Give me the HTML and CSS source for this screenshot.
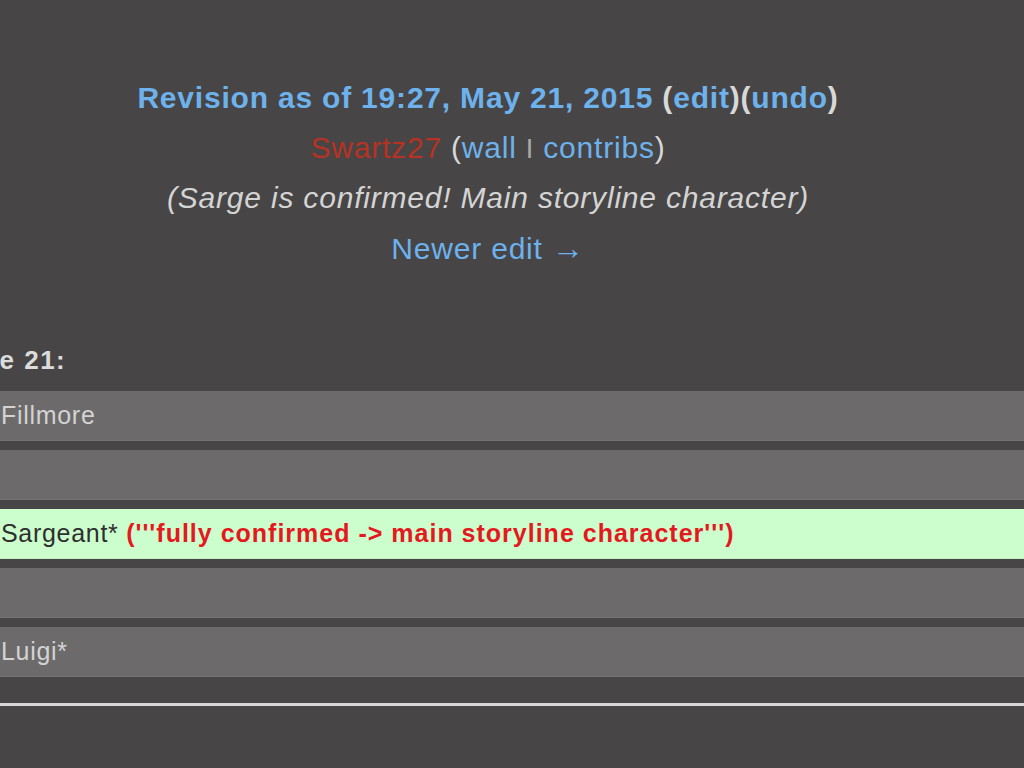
FILE: index.html
```html
<!DOCTYPE html>
<html lang="en">
<head>
<meta charset="utf-8">
<title>Revision diff</title>
<link rel="stylesheet" href="styles.css">
</head>
<body>
<div class="page">
  <header class="rev-header">
    <div class="rev-line rev-title"><a class="link">Revision as of 19:27, May 21, 2015</a> <span class="paren">(</span><a class="link">edit</a><span class="paren">)(</span><a class="link">undo</a><span class="paren">)</span></div>
    <div class="rev-line"><a class="user">Swartz27</a> <span class="paren">(</span><a class="link-plain">wall</a> <span class="sep">I</span> <a class="link-plain">contribs</a><span class="paren">)</span></div>
    <div class="rev-line summary">(Sarge is confirmed! Main storyline character)</div>
    <div class="rev-line"><a class="link-plain">Newer edit <span class="arrow">→</span></a></div>
  </header>
  <section class="diff">
    <div class="diff-lineno">Line 21:</div>
    <div class="diff-row context">Fillmore</div>
    <div class="diff-row context"></div>
    <div class="diff-row added">Sargeant* <strong class="ins">('''fully confirmed -&gt; main storyline character''')</strong></div>
    <div class="diff-row context"></div>
    <div class="diff-row context">Luigi*</div>
  </section>
  <hr class="rule">
</div>
</body>
</html>
```

FILE: styles.css
```css
html, body {
  margin: 0;
  padding: 0;
  background: #474546;
  height: 100%;
  overflow: hidden;
}

.page {
  font-family: "Liberation Sans", Arial, sans-serif;
  color: #dddddd;
  padding-top: 73px;
}

.rev-header {
  text-align: center;
  padding-right: 48px;
  font-size: 30px;
  letter-spacing: 0.8px;
}

.rev-line {
  line-height: 50px;
  height: 50px;
  white-space: nowrap;
}

.rev-title {
  font-weight: bold;
}

.link, .link-plain {
  color: #6db2ec;
  text-decoration: none;
}

.arrow {
  font-size: 32px;
}

.paren {
  color: #d8d8d8;
}

.user {
  color: #b73222;
}

.sep {
  color: #a9a9a9;
  font-size: 27px;
  font-weight: 300;
}

.summary {
  font-style: italic;
  color: #d4d4d4;
}

.diff {
  margin-top: 72px;
  display: flex;
  flex-direction: column;
  gap: 9px;
}

.diff-lineno {
  margin-left: -44px;
  font-size: 26px;
  font-weight: bold;
  letter-spacing: 1.5px;
  color: #dcdcdc;
  line-height: 30px;
  margin-bottom: 7px;
}

.diff-row {
  height: 50px;
  box-sizing: border-box;
  display: flex;
  align-items: center;
  padding-left: 1px;
  font-size: 25px;
  letter-spacing: 0.7px;
  white-space: pre;
  border-bottom: 1px solid #747273;
}

.context {
  background: #6c6a6b;
  color: #d3d3d3;
}

.added {
  background: #ccfdcc;
  color: #2f2f2f;
  border-bottom-color: #bfeebf;
}

.ins {
  color: #e4191f;
  letter-spacing: 1px;
}

.rule {
  margin: 26px 0 0 0;
  border: 0;
  height: 3px;
  background: #d6d6d6;
}
```
